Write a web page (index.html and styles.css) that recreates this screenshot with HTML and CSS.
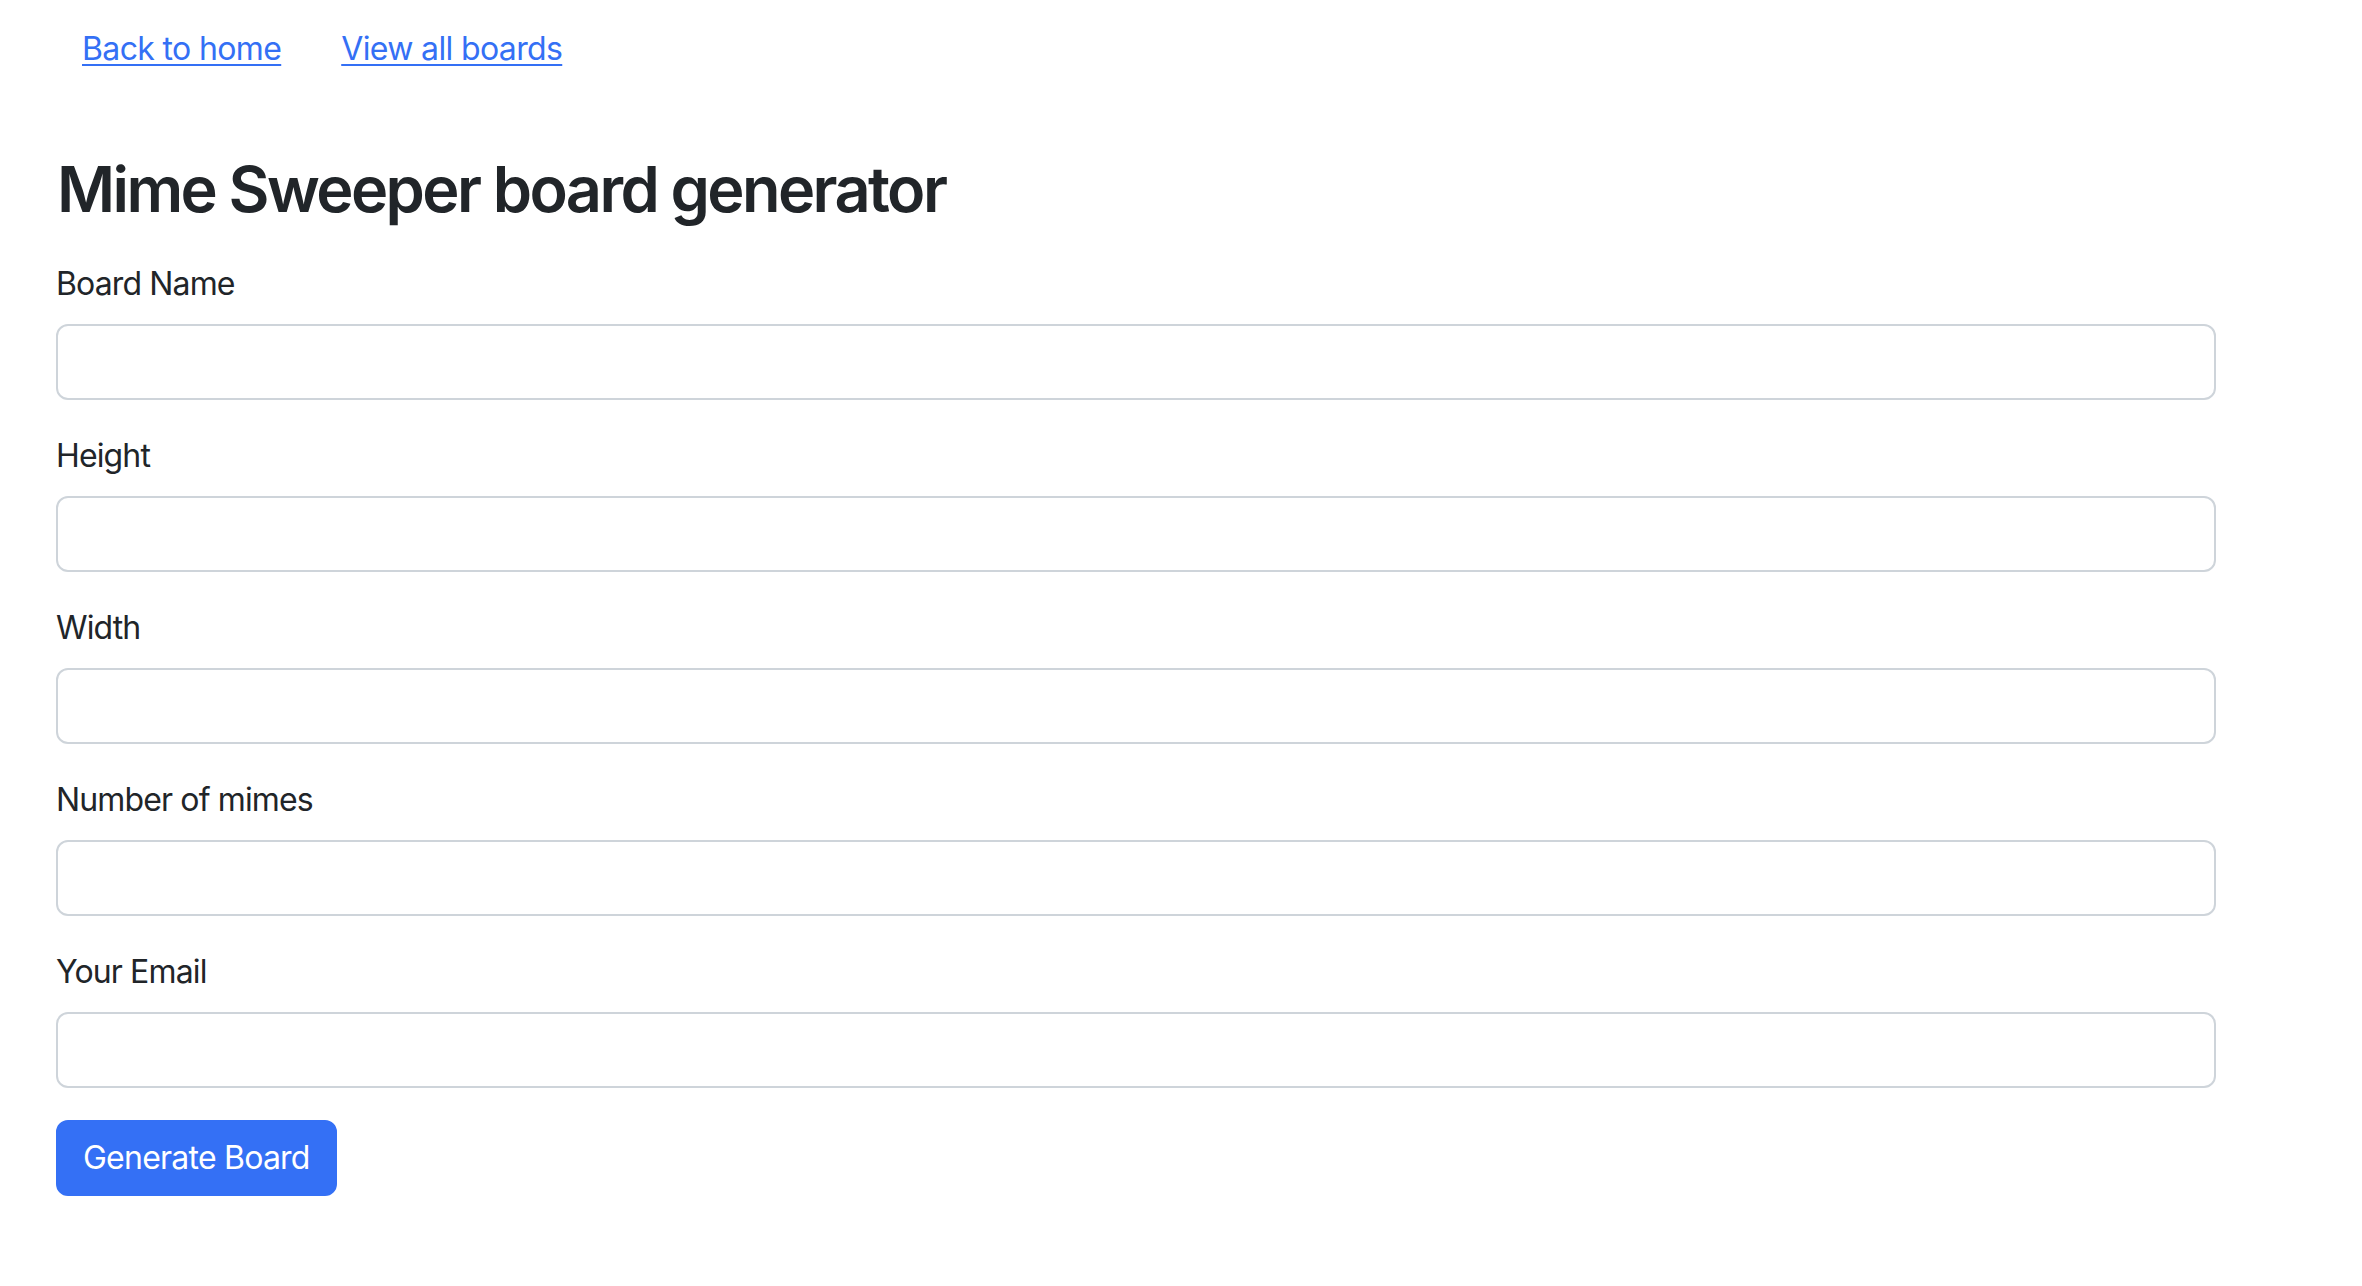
FILE: index.html
```html
<!DOCTYPE html>
<html lang="en">
<head>
<meta charset="utf-8">
<title>Mime Sweeper board generator</title>
<link rel="stylesheet" href="styles.css">
</head>
<body>
<div class="container">
  <nav class="nav">
    <a class="nav-link" href="#">Back to home</a>
    <a class="nav-link" href="#">View all boards</a>
  </nav>
  <h1 class="title">Mime Sweeper board generator</h1>
  <form class="form">
    <div class="field">
      <label class="label" for="name">Board Name</label>
      <input class="input" id="name" type="text">
    </div>
    <div class="field">
      <label class="label" for="height">Height</label>
      <input class="input" id="height" type="text">
    </div>
    <div class="field">
      <label class="label" for="width">Width</label>
      <input class="input" id="width" type="text">
    </div>
    <div class="field">
      <label class="label" for="mimes">Number of mimes</label>
      <input class="input" id="mimes" type="text">
    </div>
    <div class="field">
      <label class="label" for="email">Your Email</label>
      <input class="input" id="email" type="email">
    </div>
    <div class="actions">
      <button class="btn" type="button">Generate Board</button>
    </div>
  </form>
</div>
</body>
</html>
```
FILE: styles.css
```css
html, body {
  margin: 0;
  padding: 0;
  background: #ffffff;
}
body {
  font-family: Inter, "Liberation Sans", Arial, sans-serif;
  font-size: 32px;
  line-height: 48px;
  color: #212529;
}
.container {
  width: 2160px;
  margin-left: 56px;
}
.nav {
  display: flex;
  gap: 60px;
  padding: 25px 0 0 26px;
  height: 47px;
}
.nav-link {
  color: #3470f5;
  text-decoration: underline;
  text-decoration-thickness: 2px;
  text-underline-offset: 4px;
  letter-spacing: -0.02em;
}
.title {
  margin: 80px 0 32px 1px;
  font-size: 63px;
  line-height: 1.2;
  font-weight: 600;
  letter-spacing: -0.041em;
}
.form {
  display: flex;
  flex-direction: column;
}
.field {
  display: flex;
  flex-direction: column;
  margin-bottom: 32px;
}
.label {
  display: block;
  margin: 0 0 16px 0;
  letter-spacing: -0.027em;
}
.input {
  box-sizing: border-box;
  width: 2160px;
  height: 76px;
  margin: 0;
  border: 2px solid #ced4da;
  border-radius: 12px;
  background: #ffffff;
  font: inherit;
  padding: 12px 24px;
}
.actions {
  display: flex;
}
.btn {
  box-sizing: border-box;
  height: 76px;
  padding: 12px 25px;
  border: 2px solid #3470f5;
  border-radius: 12px;
  background: #3470f5;
  color: #ffffff;
  font-family: inherit;
  font-size: 32px;
  line-height: 48px;
  letter-spacing: -0.024em;
}
```
